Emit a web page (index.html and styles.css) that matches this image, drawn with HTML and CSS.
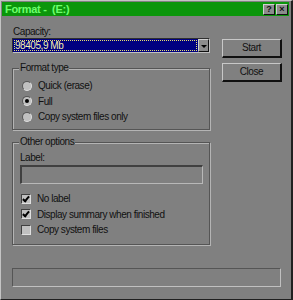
FILE: index.html
```html
<!DOCTYPE html>
<html lang="en">

<head>
    <meta charset="UTF-8">
    <title>Format</title>
    <link rel="stylesheet" href="styles.css">
</head>

<body>

    <div class="window">
        <div class="titlebar">
            <span class="title">Format -&nbsp; (E:)</span>
            <span class="tbtn">?</span>
            <span class="tbtn">&times;</span>
        </div>

        <div class="main">
            <div class="leftcol">
                <div class="caption">Capacity:</div>
                <div class="combo">
                    <div class="combo-field"><span class="focus">98405,9 Mb</span></div>
                    <div class="combo-arrow"></div>
                </div>

                <div class="group first">
                    <span class="legend">Format type</span>
                    <div class="row"><span class="radio"></span>Quick (erase)</div>
                    <div class="row"><span class="radio on"></span>Full</div>
                    <div class="row"><span class="radio"></span>Copy system files only</div>
                </div>

                <div class="group second">
                    <span class="legend">Other options</span>
                    <div class="caption small">Label:</div>
                    <div class="textbox"></div>
                    <div class="checks">
                        <div class="row"><span class="check on"></span>No label</div>
                        <div class="row"><span class="check on"></span>Display summary when finished</div>
                        <div class="row"><span class="check"></span>Copy system files</div>
                    </div>
                </div>
            </div>

            <div class="rightcol">
                <div class="button">Start</div>
                <div class="button">Close</div>
            </div>
        </div>

        <div class="status"></div>
    </div>

</body>

</html>
```

FILE: styles.css
```css
body {
    margin: 0;
    background-color: #808080;
    font-family: "Liberation Sans", Arial, sans-serif;
    font-size: 10px;
    letter-spacing: -0.45px;
    color: #111;
}

.window {
    width: 293px;
    height: 300px;
    box-sizing: border-box;
    padding: 1px;
    background-color: #808080;
    border-left: 1px solid #c4c4c4;
    border-top: 1px solid #c4c4c4;
    border-right: 2px solid #202020;
    border-bottom: 1px solid #202020;
}

.titlebar {
    display: flex;
    align-items: center;
    height: 14px;
    margin-right: 1px;
    padding-left: 3px;
    padding-right: 1px;
    background-color: #0b960b;
}

.title {
    flex: 1;
    color: #6dff6d;
    font-weight: bold;
    font-size: 11px;
    letter-spacing: -0.3px;
}

.tbtn {
    width: 10px;
    height: 9px;
    margin-left: 1px;
    background-color: #8c8c8c;
    border-top: 1px solid #d0d0d0;
    border-left: 1px solid #d0d0d0;
    border-right: 1px solid #101010;
    border-bottom: 1px solid #101010;
    font-size: 9px;
    font-weight: bold;
    line-height: 9px;
    text-align: center;
    letter-spacing: 0;
}

.main {
    display: flex;
    padding: 9px 0 0 10px;
}

.leftcol {
    width: 200px;
}

.caption {
    height: 13px;
    line-height: 13px;
    padding-left: 1px;
}

.combo {
    display: flex;
    width: 198px;
    height: 15px;
    box-sizing: border-box;
    border-top: 1px solid #303030;
    border-left: 1px solid #303030;
    border-right: 1px solid #c0c0c0;
    border-bottom: 1px solid #c0c0c0;
}

.combo-field {
    flex: 1;
    padding: 1px;
    background-color: #000080;
}

.focus {
    display: block;
    height: 11px;
    box-sizing: border-box;
    border: 1px dotted #e8e070;
    color: #f4f0b0;
    line-height: 9px;
}

.combo-arrow {
    width: 9px;
    position: relative;
    background-color: #8c8c8c;
    border-top: 1px solid #d0d0d0;
    border-left: 1px solid #d0d0d0;
    border-right: 1px solid #101010;
    border-bottom: 1px solid #101010;
}

.combo-arrow::after {
    content: "";
    position: absolute;
    left: 2px;
    top: 5px;
    border-left: 3px solid transparent;
    border-right: 3px solid transparent;
    border-top: 3px solid #000;
}

.group {
    position: relative;
    width: 198px;
    box-sizing: border-box;
    border: 1px solid #555;
    box-shadow: inset 1px 1px 0 #b4b4b4, 1px 1px 0 #b4b4b4;
}

.group.first {
    margin-top: 15px;
    height: 62px;
    padding: 9px 0 0 9px;
}

.group.second {
    margin-top: 12px;
    height: 103px;
    padding: 9px 0 0 7px;
}

.legend {
    position: absolute;
    top: -7px;
    left: 6px;
    padding: 0 1px;
    line-height: 12px;
    background-color: #808080;
}

.row {
    display: flex;
    align-items: center;
    height: 15.5px;
}

.radio {
    width: 10px;
    height: 10px;
    margin-right: 6px;
    box-sizing: border-box;
    border-radius: 50%;
    background-color: #c0c0c0;
    border: 1px solid #555;
    border-right-color: #e0e0e0;
    border-bottom-color: #e0e0e0;
    position: relative;
}

.radio.on::after {
    content: "";
    position: absolute;
    left: 2px;
    top: 2px;
    width: 4px;
    height: 4px;
    border-radius: 50%;
    background-color: #000;
}

.small {
    height: 12px;
    line-height: 12px;
    padding-left: 0;
}

.textbox {
    width: 183px;
    height: 19px;
    margin-top: 1px;
    box-sizing: border-box;
    border-top: 2px solid #404040;
    border-left: 2px solid #404040;
    border-right: 1px solid #b8b8b8;
    border-bottom: 1px solid #b8b8b8;
}

.checks {
    margin-top: 7px;
}

.check {
    width: 10px;
    height: 10px;
    margin: 0 6px 0 1px;
    box-sizing: border-box;
    background-color: #c0c0c0;
    border-top: 1px solid #404040;
    border-left: 1px solid #404040;
    border-right: 1px solid #e0e0e0;
    border-bottom: 1px solid #e0e0e0;
    position: relative;
}

.check.on::after {
    content: "";
    position: absolute;
    left: 2px;
    top: 0px;
    width: 2px;
    height: 5px;
    border-right: 2px solid #000;
    border-bottom: 2px solid #000;
    transform: rotate(40deg);
}

.rightcol {
    display: flex;
    flex-direction: column;
    gap: 5px;
    margin-left: 10px;
    padding-top: 14px;
}

.button {
    width: 60px;
    height: 19px;
    box-sizing: border-box;
    border-top: 1px solid #c8c8c8;
    border-left: 1px solid #c8c8c8;
    border-right: 2px solid #101010;
    border-bottom: 2px solid #101010;
    line-height: 16px;
    text-align: center;
}

.status {
    height: 19px;
    margin: 23px 9px 0 10px;
    box-sizing: border-box;
    border-top: 1px solid #555;
    border-left: 1px solid #555;
    border-right: 1px solid #c0c0c0;
    border-bottom: 1px solid #c0c0c0;
}
```
